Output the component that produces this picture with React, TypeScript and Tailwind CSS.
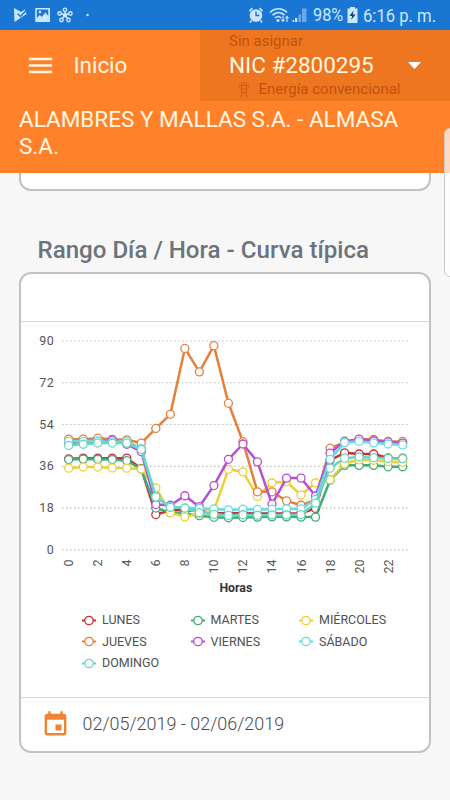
import { MdEvent, MdMenu } from "react-icons/md";

interface Series {
  name: string;
  color: string;
  values: number[];
}

const SERIES: Series[] = [
  {
    name: "LUNES",
    color: "#c4303a",
    values: [39.2, 39.5, 39.5, 39.5, 39.5, 35, 15.2, 17, 17, 16.8, 15.8, 15.8, 15.8, 15.6, 15.6, 15.6, 15.8, 17.8, 38.6, 41.8, 41.3, 41.3, 39.6, 39.5],
  },
  {
    name: "MARTES",
    color: "#42ab77",
    values: [38.9, 39.1, 39, 38.9, 38.4, 34.8, 18, 16, 15.5, 14.7, 14, 13.8, 13.9, 14.1, 14.2, 14.2, 14.1, 14.1, 30, 36.4, 36.4, 36.4, 35.8, 35.8],
  },
  {
    name: "MIÉRCOLES",
    color: "#ebcf3b",
    values: [35.2, 35.7, 35.7, 35.3, 35.2, 34.8, 26.7, 16, 14.2, 15.6, 17, 34.7, 33.6, 23, 28.9, 29.3, 23.6, 28.9, 30.2, 37.2, 38.8, 38.6, 38, 37.7],
  },
  {
    name: "JUEVES",
    color: "#e5803c",
    values: [47.7, 47.7, 48.1, 47.6, 47.4, 46, 52.3, 58.4, 86.8, 76.7, 88, 63.2, 46.6, 25, 25, 21.1, 19.2, 21.5, 43.8, 46.3, 47.6, 47.6, 46.7, 46.7],
  },
  {
    name: "VIERNES",
    color: "#b74fd6",
    values: [46.2, 46.2, 46.3, 47.3, 45.5, 42.3, 19.5, 19.2, 23.3, 18.6, 27.7, 39, 45.6, 37.9, 19.7, 30.9, 30.9, 23.2, 41.7, 46.8, 47.7, 47, 46.5, 46],
  },
  {
    name: "SÁBADO",
    color: "#66dbe3",
    values: [46.8, 46.7, 46.9, 46.4, 46.9, 43.6, 22.8, 18.6, 18.1, 17.9, 17.6, 17.2, 17.5, 17.4, 17.5, 17.7, 17.6, 21.7, 39, 46.2, 46.7, 46.1, 45.6, 45.2],
  },
  {
    name: "DOMINGO",
    color: "#69d6c0",
    values: [45, 45.5, 46, 46, 46, 43.2, 22.8, 18.3, 18, 16, 15.3, 14.8, 15.1, 14.9, 15, 15, 15.2, 20.1, 35.2, 39.5, 40, 39.7, 39.4, 39.3],
  },
];

const TICKS = [0, 18, 36, 54, 72, 90];
const HOURS = [0, 2, 4, 6, 8, 10, 12, 14, 16, 18, 20, 22];

// svg origin sits at the inner left edge of the card
const px = (hour: number) => 47.7 + hour * 14.52;
const py = (value: number) => 227.8 - value * 2.32;

function StatusBar() {
  return (
    <div className="flex h-[30px] items-center bg-[#1976d3] pl-[13px] font-['Roboto'] text-[#c9e8ff]">
      <svg width="80" height="20" viewBox="0 0 80 20" fill="currentColor">
        <path d="M1 3l7 4 4-2.500 1.500 4.500L1.500 17z" />
        <path d="M4.500 8.500l3 3L14 4.500" fill="none" stroke="#1976d3" strokeWidth="1.400" />
        <path fillRule="evenodd" d="M23 3h13.500a.5.5 0 0 1 .5.500V16.500a.5.5 0 0 1-.5.500H23a.8.8 0 0 1-.8-.8V3.800A.8.8 0 0 1 23 3zM23.800 4.600v8.400l3-3 2 2 3.500-4.500 3 3.500V4.600z" />
        <circle cx="27" cy="7" r="1.300" />
        <g stroke="currentColor" strokeWidth="1.400" fill="none">
          <path d="M52 10V6M52 10l-4-1.500M52 10l4-1.500M52 10l-3 4M52 10l3 4" />
          <circle cx="52" cy="4.800" r="1.700" />
          <circle cx="46.600" cy="8.500" r="1.700" />
          <circle cx="57.400" cy="8.500" r="1.700" />
          <circle cx="48.500" cy="15" r="1.700" />
          <circle cx="55.500" cy="15" r="1.700" />
          <circle cx="52" cy="10.200" r="1.500" fill="currentColor" />
        </g>
        <circle cx="74.500" cy="10" r="1.200" />
      </svg>
      <svg className="ml-[155px]" width="60" height="20" viewBox="0 0 60 20" fill="none" stroke="currentColor">
        <circle cx="8" cy="10.500" r="6.300" fill="currentColor" stroke="none" />
        <path d="M1.500 6.200A9 9 0 0 1 4.500 3.300M11.500 3.300a9 9 0 0 1 3 2.900M3.500 15.500L2 17.500M12.500 15.500l1.500 2" strokeWidth="1.600" />
        <path d="M8 6.500v4h3.500" stroke="#1976d3" strokeWidth="1.400" />
        <path d="M22 7.500c5-5 12-5 17 0M24.500 10.200c3.700-3.500 8.500-3.500 12 0M27 13c2-2 4.500-2 6 0" strokeWidth="1.700" />
        <circle cx="30" cy="15.500" r="1.500" fill="currentColor" stroke="none" />
        <path d="M35 11v5.500m-1.700-2l1.700 2 1.700-2M39 17v-5.500m-1.500 2l1.500-2 1.500 2" strokeWidth="1.100" />
        <path d="M44.500 15h1.600v2h-1.600zM47 13h2.200v4h-2.200z" fill="currentColor" stroke="none" />
        <path d="M50.500 9.500h2.500V17h-2.500zM54 3.500H58.500v13.500h-4.500z" fill="#69a9e8" stroke="none" />
      </svg>
      <span className="ml-[5px] w-[30px] origin-left scale-x-[0.93] text-[17.500px] whitespace-nowrap">98%</span>
      <svg className="ml-[4px]" width="11" height="16" viewBox="0 0 11 16">
        <path d="M3 0h5v1.500h2.500V16H.500V1.500H3z" fill="currentColor" />
        <path d="M6.500 3.500L2.500 9h2.700l-1 4L8.500 7.500H5.800z" fill="#123b68" />
      </svg>
      <span className="ml-[4.500px] origin-left scale-x-[0.925] text-[18px] whitespace-nowrap">6:16 p. m.</span>
    </div>
  );
}

function TowerIcon() {
  return (
    <svg width="10" height="15" viewBox="0 0 10 15" fill="none" stroke="currentColor" strokeWidth="0.800" opacity="0.800">
      <path d="M2.500 1h5M.500 3.500h9M2.500 1v2.500M7.500 1v2.500M.500 3.500v1.500M9.500 3.500v1.500M1.500 7h7M2 10h6M1 14h2.500M6.500 14H9M2.500 3.500V14M7.500 3.500V14M2.500 10L5 12l2.500-2" />
    </svg>
  );
}

function Header() {
  return (
    <header className="h-[143px] bg-[#ff822b] text-[#fff6e2]">
      <div className="flex h-[71px]">
        <div className="flex w-[200px] items-center pl-[24.500px]">
          <MdMenu className="h-[31px] w-[31px]" />
          <span className="ml-[18px] text-[22.400px]">Inicio</span>
        </div>
        <div className="flex-1 bg-[#ee7620] pl-[29px] text-[#bf530d]">
          <div className="h-[22px] text-[15px] leading-[22px]">Sin asignar</div>
          <div className="flex h-[27px] items-center text-[#fff6e2]">
            <span className="w-[179px] text-[22.500px]">NIC #2800295</span>
            <svg width="13" height="7" viewBox="0 0 13 7" fill="#fff">
              <path d="M0 0h13L6.500 7z" />
            </svg>
          </div>
          <div className="flex h-[21px] items-center pl-[10px]">
            <TowerIcon />
            <span className="ml-[9.500px] text-[15px]">Energía convencional</span>
          </div>
        </div>
      </div>
      <div className="w-[410px] pt-[4.500px] pl-[19px] text-[22.500px] leading-[27px]">
        ALAMBRES Y MALLAS S.A. - ALMASA S.A.
      </div>
    </header>
  );
}

function Chart() {
  return (
    <svg width="408" height="274" viewBox="0 0 408 274" className="font-['Roboto']">
      {TICKS.map((t) => (
        <g key={t}>
          <line x1="41" x2="388" y1={py(t)} y2={py(t)} stroke="#bdbdbd" strokeWidth="1.200" strokeDasharray="1.500 2.500" />
          <text x="33" y={py(t) + 4} textAnchor="end" fontSize="12.500" letterSpacing="0.300" fill="#555">
            {t}
          </text>
        </g>
      ))}
      {HOURS.map((h) => (
        <text
          key={h}
          transform={`translate(${px(h) + 4.500} 237.500) rotate(-90)`}
          textAnchor="end"
          fontSize="12.500"
          fill="#555"
        >
          {h}
        </text>
      ))}
      {SERIES.map((s) => (
        <g key={s.name} stroke={s.color}>
          <polyline
            points={s.values.map((v, i) => `${px(i)},${py(v)}`).join(" ")}
            fill="none"
            strokeWidth="2.500"
            strokeLinejoin="round"
          />
          {s.values.map((v, i) => (
            <circle key={i} cx={px(i)} cy={py(v)} r="4" fill="#fff" strokeWidth="1.300" />
          ))}
        </g>
      ))}
      <text x="214.800" y="269.500" textAnchor="middle" fontSize="12.300" fontWeight="700" fill="#333">
        Horas
      </text>
    </svg>
  );
}

function Legend() {
  return (
    <div className="mt-[14px] grid grid-cols-[108.500px_108.500px_100px] pl-[61px] text-[12.500px] text-[#505050]">
      {SERIES.map((s) => (
        <div key={s.name} className="flex h-[21.300px] items-center">
          <svg width="14" height="11" viewBox="0 0 14 11" stroke={s.color}>
            <path d="M0 5.500h14" strokeWidth="2" />
            <circle cx="7" cy="5.500" r="4.200" fill="#fff" strokeWidth="1.300" />
          </svg>
          <span className="ml-[6px]">{s.name}</span>
        </div>
      ))}
    </div>
  );
}

export default function App() {
  return (
    <div className="relative h-[800px] w-[450px] overflow-hidden bg-[#f7f7f7] font-['Roboto',sans-serif]">
      <StatusBar />
      <Header />
      <main className="px-[19px]">
        <div className="h-[18px] w-[412px] rounded-b-[12px] border-2 border-t-0 border-[#c2c2c2] bg-white" />
        <h2 className="mt-[43px] ml-[18.500px] h-[38px] text-[24.100px] leading-[32px] font-medium text-[#6b737c]">
          Rango Día / Hora - Curva típica
        </h2>
        <section className="flex h-[481px] w-[412px] flex-col rounded-[12px] border-2 border-[#c2c2c2] bg-white">
          <div className="h-[48px] border-b border-b-[#f0d3bd]" />
          <Chart />
          <Legend />
          <div className="mt-auto flex h-[54px] items-center border-t border-t-[#f0d3bd] pl-[19.500px]">
            <MdEvent className="h-[29px] w-[29px] text-[#ee8434]" />
            <span className="ml-[13px] text-[17.950px] font-light text-[#4c4c4c]">02/05/2019 - 02/06/2019</span>
          </div>
        </section>
      </main>
      {/* edge panel handle */}
      <div className="absolute top-[128px] -right-[10px] h-[149px] w-[16px] rounded-[6px] border border-[#c9c9c9] bg-white/70" />
    </div>
  );
}
